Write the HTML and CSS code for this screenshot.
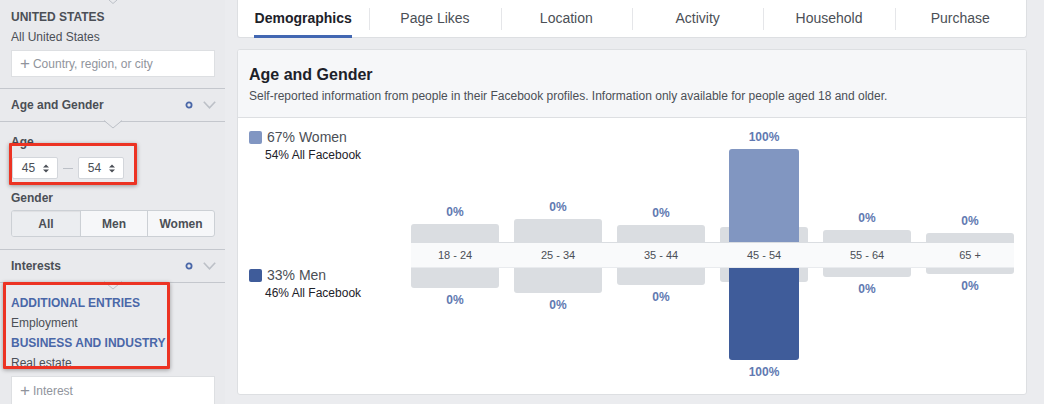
FILE: index.html
```html
<!DOCTYPE html>
<html>
<head>
<meta charset="utf-8">
<link rel="stylesheet" href="styles.css">
</head>
<body>
<div class="page">
  <aside class="sidebar">
    <svg class="top-tip" width="18" height="4" viewBox="0 0 18 4"><polyline points="5,0 9,3.5 13,0" fill="none" stroke="#bcc0c7" stroke-width="1"/></svg>
    <div class="loc">
      <div class="sb-title">UNITED STATES</div>
      <div class="sb-text loc-sub">All United States</div>
      <div class="sb-input"><span class="plus">+</span>Country, region, or city</div>
    </div>

    <div class="sec-head">
      <span class="sb-title">Age and Gender</span>
      <span class="sec-icons">
        <svg width="8" height="8" viewBox="0 0 8 8"><circle cx="4" cy="4" r="2.6" fill="none" stroke="#4a67a8" stroke-width="1.8"/></svg>
        <svg width="13" height="8" viewBox="0 0 13 8"><polyline points="0.8,0.8 6.5,6.8 12.2,0.8" fill="none" stroke="#bcc0c7" stroke-width="1.6"/></svg>
      </span>
      <svg class="notch" width="20" height="9" viewBox="0 0 20 9"><polygon points="1,0 10,8 19,0" fill="#e9eaed"/><polyline points="1,0.5 10,8 19,0.5" fill="none" stroke="#bcc0c7" stroke-width="1"/></svg>
    </div>

    <div class="sec-body age-body">
      <div class="sb-title lbl">Age</div>
      <div class="age-row">
        <div class="select">45
          <svg width="6" height="9" viewBox="0 0 6 9"><path d="M0 3.6 L3 0.4 L6 3.6Z M0 5.4 L3 8.6 L6 5.4Z" fill="#4b4f56"/></svg>
        </div>
        <span class="dash"></span>
        <div class="select">54
          <svg width="6" height="9" viewBox="0 0 6 9"><path d="M0 3.6 L3 0.4 L6 3.6Z M0 5.4 L3 8.6 L6 5.4Z" fill="#4b4f56"/></svg>
        </div>
      </div>
      <div class="sb-title lbl gender-lbl">Gender</div>
      <div class="seg">
        <div class="seg-btn active">All</div>
        <div class="seg-btn">Men</div>
        <div class="seg-btn">Women</div>
      </div>
    </div>

    <div class="sec-head">
      <span class="sb-title">Interests</span>
      <span class="sec-icons">
        <svg width="8" height="8" viewBox="0 0 8 8"><circle cx="4" cy="4" r="2.6" fill="none" stroke="#4a67a8" stroke-width="1.8"/></svg>
        <svg width="13" height="8" viewBox="0 0 13 8"><polyline points="0.8,0.8 6.5,6.8 12.2,0.8" fill="none" stroke="#bcc0c7" stroke-width="1.6"/></svg>
      </span>
      <svg class="notch" width="20" height="9" viewBox="0 0 20 9"><polygon points="1,0 10,8 19,0" fill="#e9eaed"/><polyline points="1,0.5 10,8 19,0.5" fill="none" stroke="#bcc0c7" stroke-width="1"/></svg>
    </div>

    <div class="sec-body int-body">
      <div class="int-cat">ADDITIONAL ENTRIES</div>
      <div class="sb-text int-item">Employment</div>
      <div class="int-cat">BUSINESS AND INDUSTRY</div>
      <div class="sb-text int-item">Real estate</div>
      <div class="sb-input int-input"><span class="plus">+</span>Interest</div>
    </div>

    <div class="highlight hl-age"></div>
    <div class="highlight hl-int"></div>
  </aside>

  <main class="main">
    <nav class="tabs">
      <div class="tab active"><span>Demographics</span></div>
      <div class="tab"><span>Page Likes</span></div>
      <div class="tab"><span>Location</span></div>
      <div class="tab"><span>Activity</span></div>
      <div class="tab"><span>Household</span></div>
      <div class="tab"><span>Purchase</span></div>
    </nav>

    <section class="card">
      <header class="card-head">
        <h2>Age and Gender</h2>
        <p>Self-reported information from people in their Facebook profiles. Information only available for people aged 18 and older.</p>
      </header>
      <div class="chart">
        <div class="legend legend-women">
          <div class="legend-row"><span class="sw sw-women"></span>67% Women</div>
          <div class="legend-sub">54% All Facebook</div>
        </div>

        <div class="bars bars-top">
          <div class="col"><span class="pct">0%</span><div class="stack"><div class="gray" style="height:18px"></div></div></div>
          <div class="col"><span class="pct">0%</span><div class="stack"><div class="gray" style="height:23px"></div></div></div>
          <div class="col"><span class="pct">0%</span><div class="stack"><div class="gray" style="height:17px"></div></div></div>
          <div class="col"><span class="pct">100%</span><div class="stack"><div class="gray" style="height:15px"></div><div class="blue women" style="height:93px"></div></div></div>
          <div class="col"><span class="pct">0%</span><div class="stack"><div class="gray" style="height:12px"></div></div></div>
          <div class="col"><span class="pct">0%</span><div class="stack"><div class="gray" style="height:9px"></div></div></div>
        </div>

        <div class="band">
          <span>18 - 24</span><span>25 - 34</span><span>35 - 44</span><span>45 - 54</span><span>55 - 64</span><span>65 +</span>
        </div>

        <div class="legend legend-men">
          <div class="legend-row"><span class="sw sw-men"></span>33% Men</div>
          <div class="legend-sub">46% All Facebook</div>
        </div>

        <div class="bars bars-bottom">
          <div class="col"><div class="stack"><div class="gray" style="height:20px"></div></div><span class="pct">0%</span></div>
          <div class="col"><div class="stack"><div class="gray" style="height:25px"></div></div><span class="pct">0%</span></div>
          <div class="col"><div class="stack"><div class="gray" style="height:17px"></div></div><span class="pct">0%</span></div>
          <div class="col"><div class="stack"><div class="gray" style="height:14px"></div><div class="blue men" style="height:92px"></div></div><span class="pct">100%</span></div>
          <div class="col"><div class="stack"><div class="gray" style="height:9px"></div></div><span class="pct">0%</span></div>
          <div class="col"><div class="stack"><div class="gray" style="height:6px"></div></div><span class="pct">0%</span></div>
        </div>
      </div>
    </section>
  </main>
</div>
</body>
</html>
```

FILE: styles.css
```css
* { box-sizing: border-box; }
html, body { margin: 0; padding: 0; }
body {
  font-family: "Liberation Sans", Helvetica, Arial, sans-serif;
  color: #4b4f56;
  background: #ebecef;
  width: 1044px;
  height: 404px;
  overflow: hidden;
}
.page { display: flex; height: 404px; }

/* ---------- Sidebar ---------- */
.sidebar {
  position: relative;
  width: 225px;
  flex: none;
  background: #e9eaed;
  height: 404px;
  overflow: hidden;
}
.top-tip { position: absolute; left: 104px; top: 0; display: block; }
.sb-title { font-size: 12px; font-weight: bold; line-height: 16px; color: #4b4f56; }
.sb-text { font-size: 12px; line-height: 16px; color: #4b4f56; }
.loc { padding: 9px 10px 11px 11px; }
.loc-sub { margin-top: 4px; }
.sb-input {
  margin-top: 5px;
  height: 27px;
  background: #fff;
  border: 1px solid #dddfe2;
  display: flex;
  align-items: center;
  padding-left: 8px;
  font-size: 12px;
  color: #90949c;
}
.plus { font-size: 17px; line-height: 16px; margin-right: 3px; color: #90949c; font-weight: normal; }

.sec-head {
  position: relative;
  height: 34px;
  border-top: 1px solid #c4c7cd;
  border-bottom: 1px solid #c4c7cd;
  display: flex;
  align-items: center;
  justify-content: space-between;
  padding: 0 9px 1px 11px;
}
.sec-icons { display: flex; align-items: center; gap: 10px; }
.sec-icons svg { display: block; }
.notch { position: absolute; left: 103px; top: 100%; margin-top: -1px; display: block; }

.sec-body { padding: 0 10px 0 11px; }
.age-body { padding-top: 12px; padding-bottom: 12px; }
.age-row { display: flex; align-items: center; margin-top: 7px; }
.select {
  width: 46px;
  height: 22px;
  background: #fff;
  border: 1px solid #d3d6db;
  border-radius: 2px;
  display: flex;
  align-items: center;
  justify-content: center;
  gap: 8px;
  font-size: 12px;
  color: #4b4f56;
  padding-left: 1px;
}
.select:first-child { margin-left: 1px; }
.select svg { display: block; }
.dash { width: 10px; height: 1px; background: #bcc0c7; margin: 0 5px; }
.gender-lbl { margin-top: 11px; }
.seg {
  margin-top: 4px;
  display: grid;
  grid-template-columns: 68px 67px 1fr;
  height: 27px;
  border: 1px solid #ccd0d5;
  border-radius: 3px;
  overflow: hidden;
  background: #f6f7f9;
}
.seg-btn {
  display: flex;
  align-items: center;
  justify-content: center;
  font-size: 12px;
  font-weight: bold;
  color: #4b4f56;
}
.seg-btn + .seg-btn { border-left: 1px solid #ccd0d5; }
.seg-btn.active { background: #ebedf0; box-shadow: inset 0 1px 1px rgba(0,0,0,0.06); }

.int-body { padding-top: 10px; }
.int-cat { font-size: 12px; font-weight: bold; line-height: 20px; color: #4a67a8; }
.int-item { line-height: 20px; }
.int-input { margin-top: 3px; height: 30px; }

.highlight {
  position: absolute;
  border: 3px solid #ec3323;
  border-radius: 1px;
  box-shadow: 0 1px 4px rgba(0,0,0,0.35);
  pointer-events: none;
}
.hl-age { left: 9px; top: 143px; width: 128px; height: 42px; }
.hl-int { left: 3px; top: 282px; width: 167px; height: 87px; }

/* ---------- Main ---------- */
.main { flex: 1; padding: 0 17px 0 12px; }
.tabs {
  display: grid;
  grid-template-columns: repeat(6, 1fr);
  height: 38px;
  background: #fff;
  border: 1px solid #dddfe2;
  border-top: none;
  border-radius: 0 0 3px 3px;
}
.tab {
  display: flex;
  justify-content: center;
  align-items: flex-start;
  font-size: 14px;
  color: #4b4f56;
}
.tab + .tab {
  background: linear-gradient(#e5e6e9, #e5e6e9) left 8px / 1px 22px no-repeat;
}
.tab span {
  line-height: 18px;
  padding: 9px 1px 8px;
  border-bottom: 3px solid transparent;
}
.tab.active span {
  font-weight: bold;
  color: #1d2129;
  border-bottom-color: #4267b2;
  padding-left: 1px;
  padding-right: 0;
  margin-left: -2px;
}

.card {
  margin-top: 11px;
  height: 346px;
  background: #fff;
  border: 1px solid #dddfe2;
  border-radius: 3px;
  overflow: hidden;
}
.card-head {
  background: #f6f7f9;
  border-bottom: 1px solid #dddfe2;
  padding: 15px 11px 13px;
}
.card-head h2 {
  margin: 0;
  font-size: 16px;
  line-height: 20px;
  font-weight: bold;
  color: #1d2129;
}
.card-head p {
  margin: 3px 0 0;
  font-size: 12px;
  line-height: 16px;
  color: #4b4f56;
}

.chart {
  display: grid;
  grid-template-columns: 162px 603px;
  grid-template-rows: 124px 26px 1fr;
  padding-left: 11px;
  height: 276px;
}
.legend { grid-column: 1; }
.legend-women { grid-row: 1; padding-top: 11px; }
.legend-men { grid-row: 3; margin-top: -1px; }
.legend-row {
  display: flex;
  align-items: center;
  font-size: 14px;
  line-height: 16px;
  color: #4b4f56;
}
.sw { width: 13px; height: 13px; border-radius: 2px; margin-right: 5px; }
.sw-women { background: #8196c2; }
.sw-men { background: #3f5c9a; }
.legend-sub { font-size: 12px; line-height: 16px; margin-top: 2px; padding-left: 16px; color: #1d2129; }

.bars {
  grid-column: 2;
  display: grid;
  grid-template-columns: repeat(6, 88px);
  column-gap: 15px;
}
.bars-top { grid-row: 1; }
.bars-bottom { grid-row: 3; }
.col { display: flex; flex-direction: column; align-items: center; }
.bars-top .col { justify-content: flex-end; }
.bars-bottom .col { justify-content: flex-start; }
.pct {
  font-size: 12px;
  font-weight: bold;
  line-height: 14px;
  color: #6179b1;
}
.bars-top .pct { margin-bottom: 5px; }
.bars-bottom .pct { margin-top: 5px; }
.stack { display: grid; width: 88px; }
.stack > div { grid-area: 1 / 1; justify-self: center; }
.gray { width: 88px; background: #dadde1; }
.blue { width: 70px; }
.blue.women { background: #8196c1; }
.blue.men { background: #3f5c9a; }
.bars-top .stack > div { align-self: end; border-radius: 3px 3px 0 0; }
.bars-bottom .stack > div { align-self: start; border-radius: 0 0 3px 3px; }

.band {
  grid-column: 2;
  grid-row: 2;
  display: grid;
  grid-template-columns: repeat(6, 88px);
  column-gap: 15px;
  align-items: center;
  background: #f9fafb;
  border-top: 1px solid #dadde1;
  border-bottom: 1px solid #e9ebee;
  font-size: 11px;
  color: #4b4f56;
}
.band span { text-align: center; }
```
